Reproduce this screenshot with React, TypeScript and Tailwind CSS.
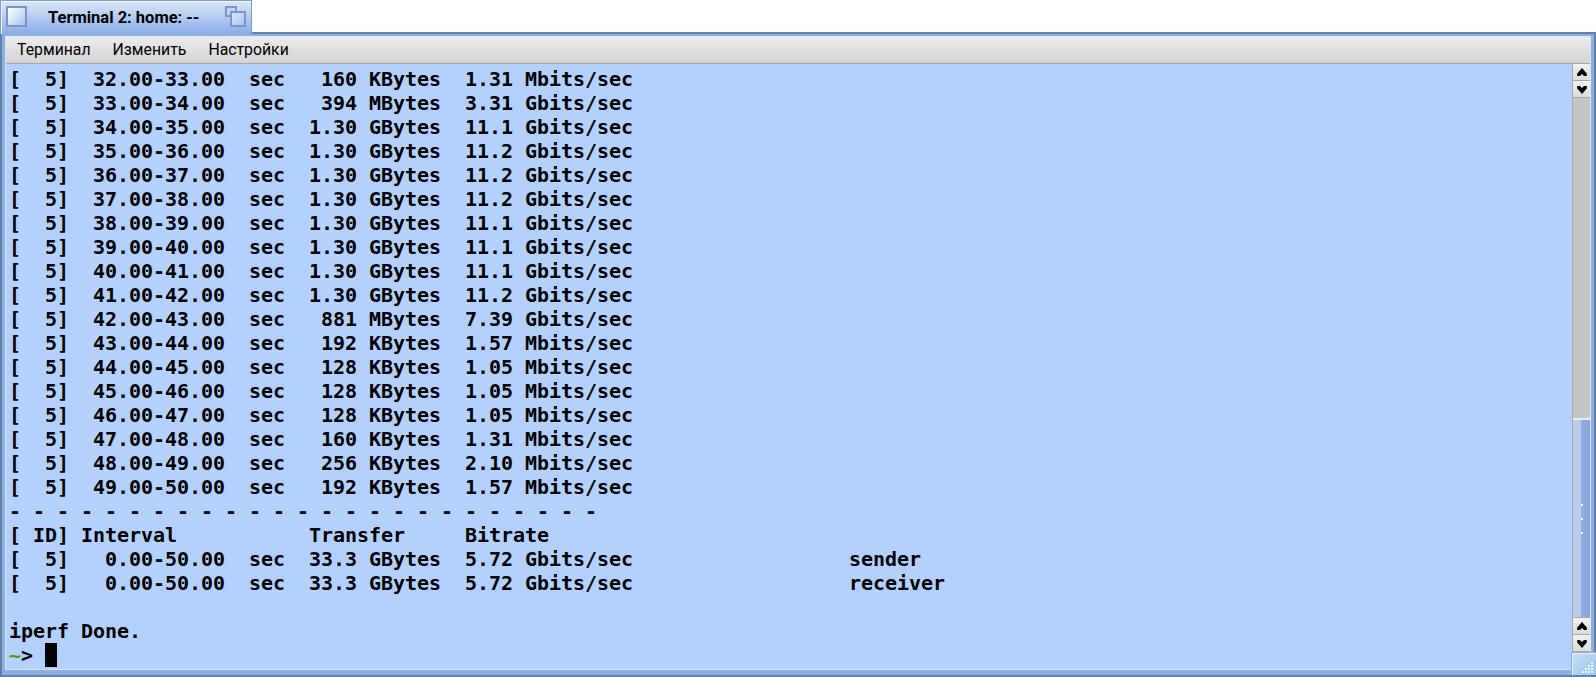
const rows: string[] = [
  "[  5]  32.00-33.00  sec   160 KBytes  1.31 Mbits/sec",
  "[  5]  33.00-34.00  sec   394 MBytes  3.31 Gbits/sec",
  "[  5]  34.00-35.00  sec  1.30 GBytes  11.1 Gbits/sec",
  "[  5]  35.00-36.00  sec  1.30 GBytes  11.2 Gbits/sec",
  "[  5]  36.00-37.00  sec  1.30 GBytes  11.2 Gbits/sec",
  "[  5]  37.00-38.00  sec  1.30 GBytes  11.2 Gbits/sec",
  "[  5]  38.00-39.00  sec  1.30 GBytes  11.1 Gbits/sec",
  "[  5]  39.00-40.00  sec  1.30 GBytes  11.1 Gbits/sec",
  "[  5]  40.00-41.00  sec  1.30 GBytes  11.1 Gbits/sec",
  "[  5]  41.00-42.00  sec  1.30 GBytes  11.2 Gbits/sec",
  "[  5]  42.00-43.00  sec   881 MBytes  7.39 Gbits/sec",
  "[  5]  43.00-44.00  sec   192 KBytes  1.57 Mbits/sec",
  "[  5]  44.00-45.00  sec   128 KBytes  1.05 Mbits/sec",
  "[  5]  45.00-46.00  sec   128 KBytes  1.05 Mbits/sec",
  "[  5]  46.00-47.00  sec   128 KBytes  1.05 Mbits/sec",
  "[  5]  47.00-48.00  sec   160 KBytes  1.31 Mbits/sec",
  "[  5]  48.00-49.00  sec   256 KBytes  2.10 Mbits/sec",
  "[  5]  49.00-50.00  sec   192 KBytes  1.57 Mbits/sec",
  "- - - - - - - - - - - - - - - - - - - - - - - - -",
  "[ ID] Interval           Transfer     Bitrate",
  "[  5]   0.00-50.00  sec  33.3 GBytes  5.72 Gbits/sec                  sender",
  "[  5]   0.00-50.00  sec  33.3 GBytes  5.72 Gbits/sec                  receiver",
  "",
  "iperf Done.",
];

// dots of the resize grip, bottom right triangle
const gripDots: [number, number][] = [
  [9, 0], [6, 3], [9, 3], [3, 6], [6, 6], [9, 6], [0, 9], [3, 9], [6, 9], [9, 9],
];

function Arrow({ down }: { down?: boolean }) {
  return (
    <div className="flex h-[17px] items-center justify-center border-b border-[#a8a8a8] bg-gradient-to-b from-[#f2f2f2] to-[#dcdcdc]">
      <svg width="10" height="9" viewBox="0 0 10 9" className={down ? "rotate-180" : ""}>
        <path d="M5 0 L9.8 5.5 V8 H7 L5 6 L3 8 H0.2 V5.5 Z" fill="#000" />
      </svg>
    </div>
  );
}

export default function App() {
  return (
    <div className="relative flex h-[677px] w-[1596px] flex-col overflow-hidden bg-white font-['Roboto',sans-serif]">
      {/* title tab */}
      <div className="relative z-10 -mb-[2px] flex h-[34px] w-[252px] items-start border-x border-t border-[#7c9cc4] bg-gradient-to-b from-[#dbe7f9] to-[#8aafe6] pl-[5px] pr-[5px] pt-[5px] shadow-[inset_1px_1px_0_#f4f8fe]">
        <div className="h-[21px] w-[21px] border-2 border-[#7896c6] bg-gradient-to-br from-white to-[#a9c4ee]" />
        <span className="ml-[21px] flex-1 text-[16.5px] font-bold leading-[24px] text-black">Terminal 2: home: --</span>
        <div className="relative h-[21px] w-[21px]">
          <div className="absolute left-0 top-0 h-[11px] w-[12px] border-2 border-[#7896c6] bg-[#c4d6f3]" />
          <div className="absolute bottom-0 right-0 h-[16px] w-[16px] border-2 border-[#7896c6] bg-gradient-to-br from-[#dbe7f9] to-[#a9c4ee]" />
        </div>
      </div>

      {/* window frame */}
      <div className="flex min-h-0 flex-1 flex-col border-[2px] border-[#5f83aa] bg-[#8aafe6] px-[3px] pb-[5px] pt-[2px]">
        <div className="flex min-h-0 flex-1 flex-col border border-[#dbe6f6]">
          <div className="relative z-20 flex h-[27px] items-center gap-[22px] border-b border-[#a8a8a8] bg-gradient-to-b from-[#ececec] to-[#d4d4d4] pl-[11px] text-[15.8px] text-black">
            <span>Терминал</span>
            <span>Изменить</span>
            <span>Настройки</span>
          </div>
          <div className="flex min-h-0 flex-1">
            <div className="min-w-0 flex-1 overflow-hidden bg-[#b3d1ff] pl-[3px] font-['DejaVu_Sans_Mono',monospace] text-[20px] font-bold leading-[24px] tracking-[-0.04px] text-black">
              <div className="whitespace-pre pt-[3px]">
                {rows.map((row, i) => (
                  <div key={i} className="h-[24px]">{row}</div>
                ))}
                <div className="flex h-[24px] items-center">
                  <span className="text-[#4e9a06]">~</span>
                  <span>&gt;</span>
                  <span className="ml-[12px] inline-block h-[24px] w-[12px] bg-black" />
                </div>
              </div>
            </div>
            <div className="flex w-[18px] flex-col border-l border-[#a8a8a8] bg-[#c4c4c4]">
              <Arrow />
              <Arrow down />
              <div className="flex-1" />
              <div className="flex h-[199px] items-center border-t-2 border-[#e8eef8] bg-[linear-gradient(to_right,#b9cdeb_0,#b9cdeb_8px,#8eace0_8px,#86a6dc_100%)] pl-[8px]">
                <div className="flex flex-col gap-[12px]">
                  <div className="h-[2px] w-[2px] bg-white" />
                  <div className="h-[2px] w-[2px] bg-white" />
                  <div className="h-[2px] w-[2px] bg-white" />
                </div>
              </div>
              <div className="border-t border-[#a8a8a8]" />
              <Arrow />
              <Arrow down />
              <div className="h-[17px]" />
            </div>
          </div>
        </div>
      </div>

      {/* resize grip */}
      <div className="absolute bottom-[2px] right-0 z-30 h-[23px] w-[25px] rounded-tl-[2px] border-l border-t border-[#8eaad2] bg-gradient-to-br from-[#c9def8] to-[#a3c2ec] shadow-[inset_1px_1px_0_#e8f1fc]">
        <div className="absolute bottom-[2px] right-[3px] h-[11px] w-[11px]">
          {gripDots.map(([x, y]) => (
            <div key={`${x}-${y}`} className="absolute h-[2px] w-[2px] bg-[#eaf2fd]" style={{ left: x, top: y }} />
          ))}
        </div>
      </div>
      <div className="absolute bottom-0 right-0 z-30 h-[2px] w-[25px] bg-[#5f83aa]" />
    </div>
  );
}
